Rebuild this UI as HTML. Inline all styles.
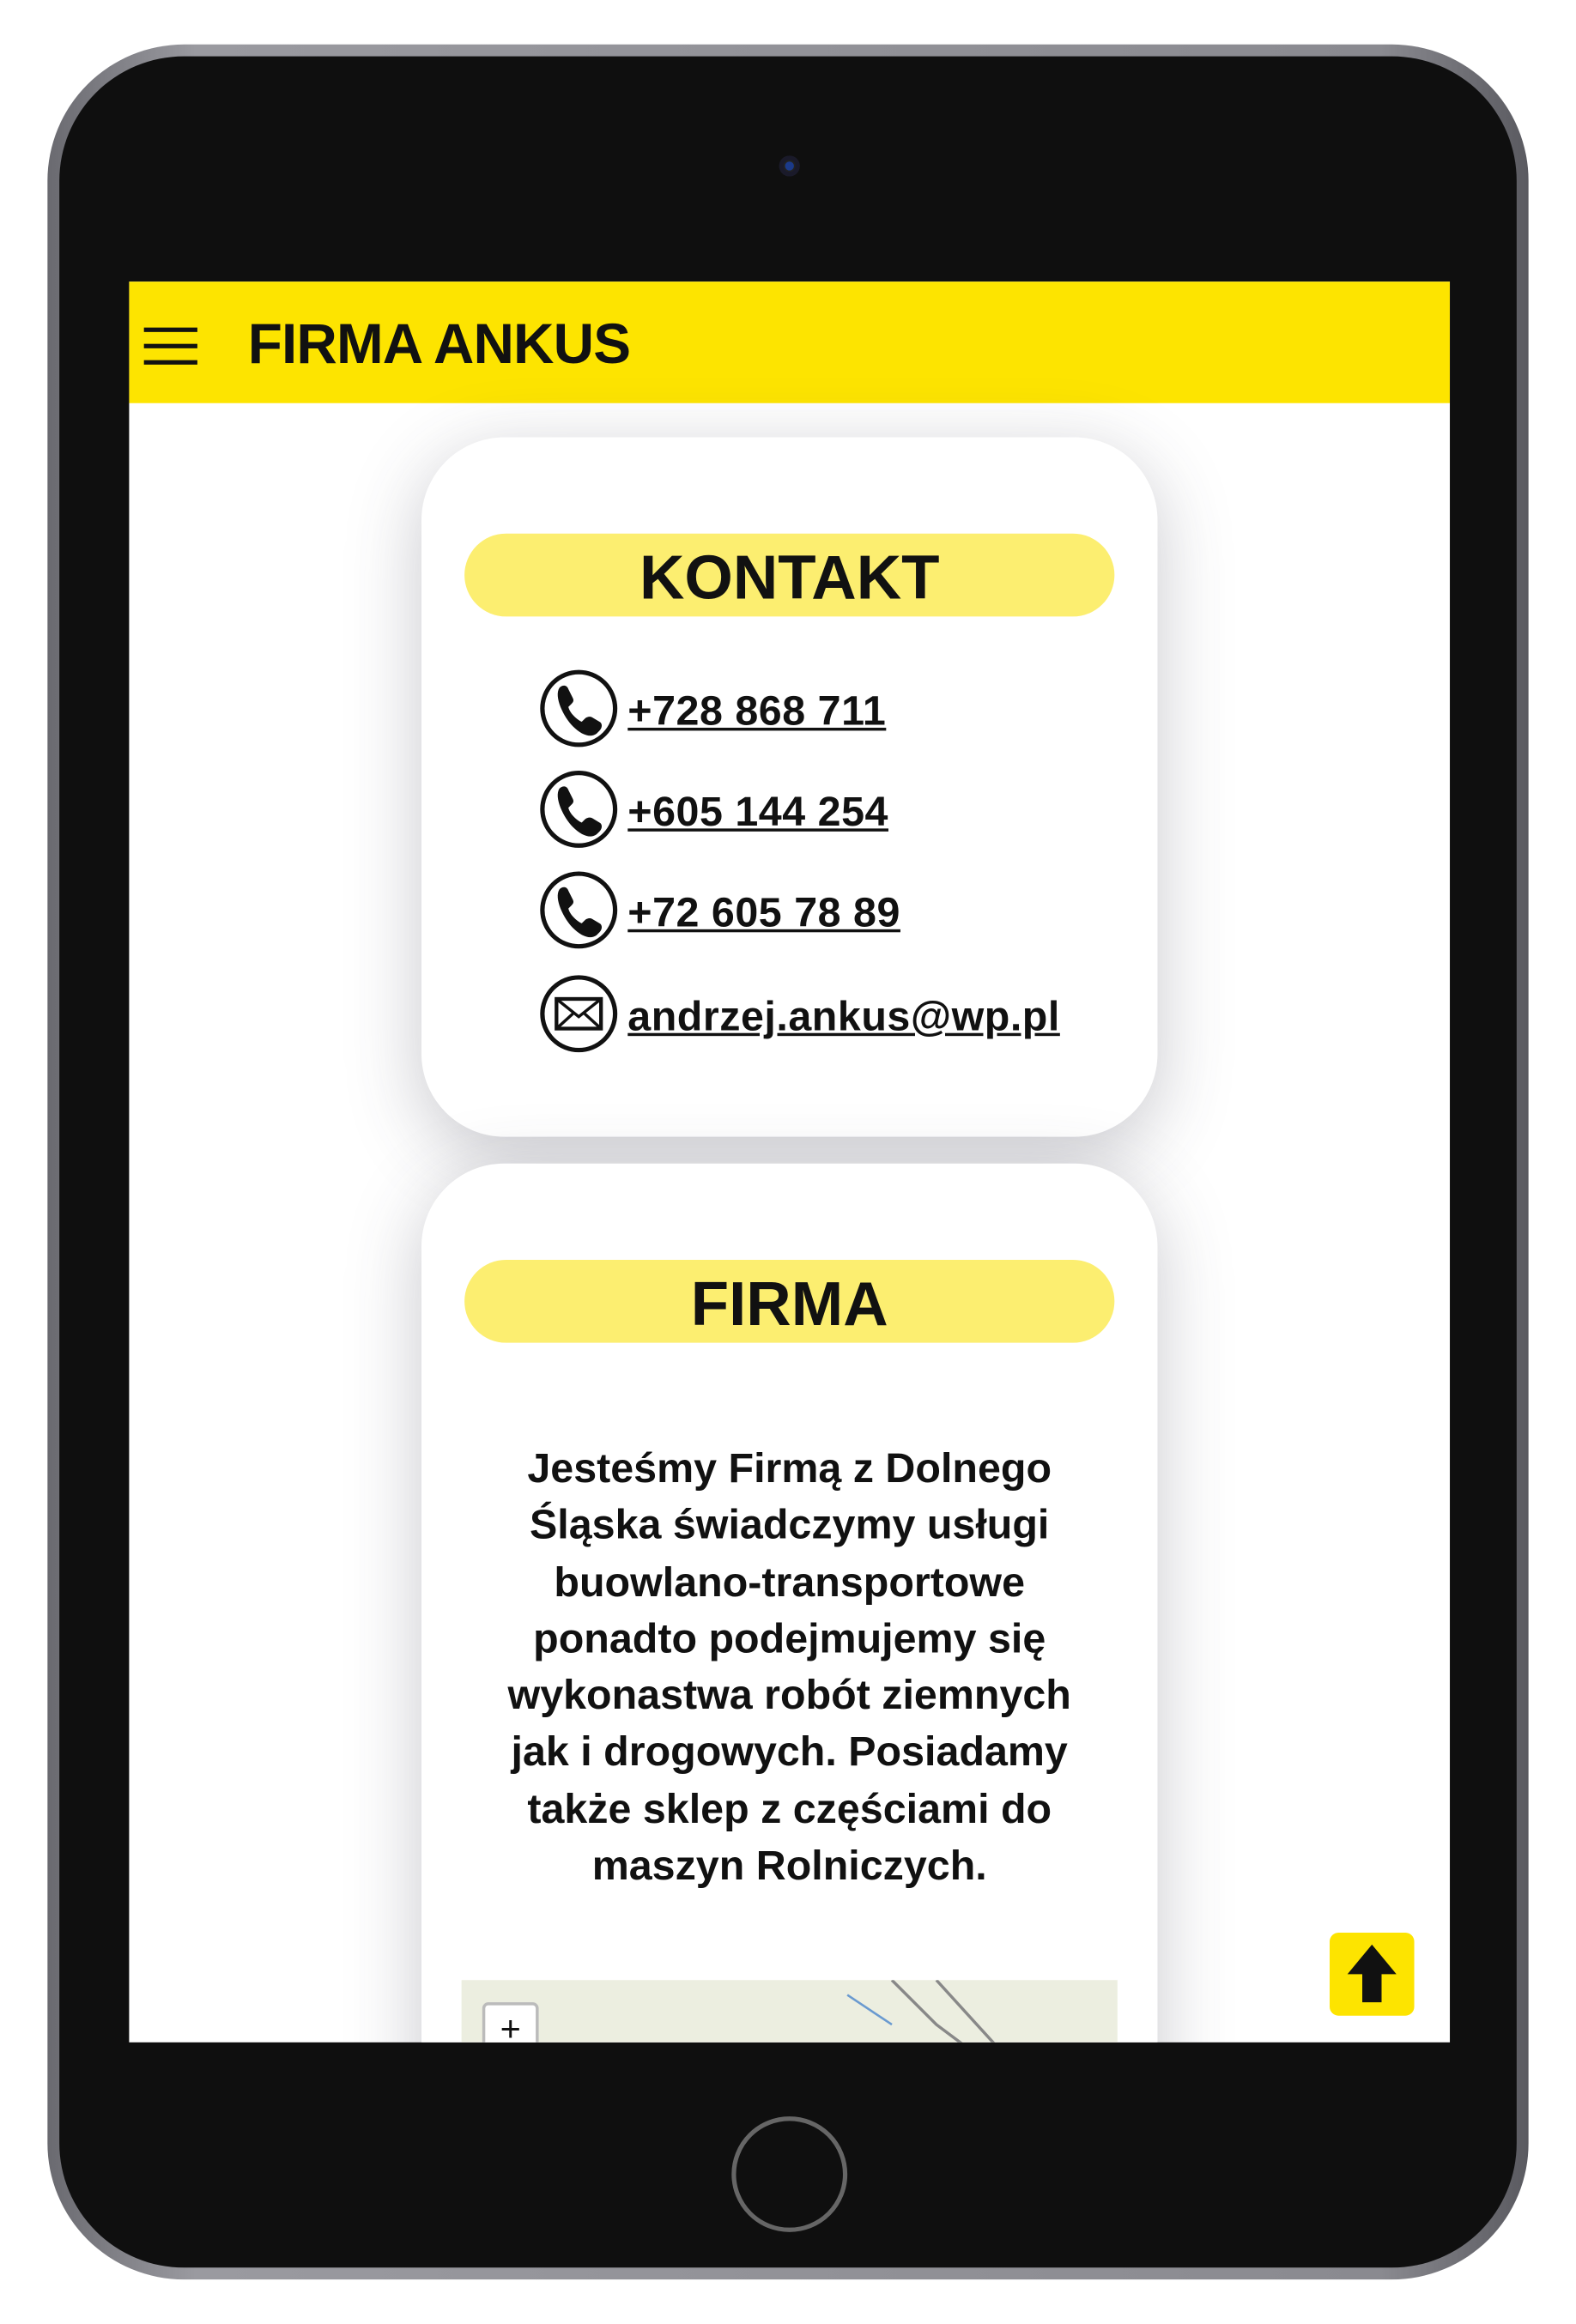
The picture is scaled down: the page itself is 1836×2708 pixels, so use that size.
<!DOCTYPE html>
<html><head><meta charset="utf-8"><style>
html,body{margin:0;padding:0;background:#fff;width:1836px;height:2708px;overflow:hidden}
#w{position:absolute;left:0;top:0;width:1062px;height:1568px;transform:scale(1.7288,1.727);transform-origin:0 0;font-family:"Liberation Sans",sans-serif;font-weight:bold;color:#111}
.dev{position:absolute;left:32px;top:30px;width:998px;height:1508px;border-radius:92px;background:linear-gradient(90deg,#6a6a70,#9a9aa0 10%,#8a8a90 90%,#5a5a60);}
.blk{position:absolute;left:8px;top:8px;right:8px;bottom:8px;border-radius:84px;background:#0f0f0f}
.cam{position:absolute;left:525px;top:105px;width:14px;height:14px;border-radius:50%;background:#222;box-shadow:inset 0 0 0 3px #1a1a2a}
.cam:after{content:"";position:absolute;left:4px;top:4px;width:6px;height:6px;border-radius:50%;background:#1b3a8a}
.home{position:absolute;left:493px;top:1428px;width:78px;height:78px;border-radius:50%;border:3px solid #666;box-sizing:border-box}
.scr{position:absolute;left:87px;top:190px;width:890px;height:1188px;background:#fff;overflow:hidden}
.hdr{position:absolute;left:0;top:0;width:890px;height:82px;background:#fde400}
.hb{position:absolute;left:10px;width:36px;height:3px;background:#111}
.ttl{position:absolute;left:80px;top:22px;font-size:38px;letter-spacing:-0.5px}
.card{position:absolute;left:197px;width:496px;background:#fff;border-radius:56px;box-shadow:0 12px 50px rgba(60,60,80,.28)}
.pill{position:absolute;left:29px;width:438px;height:56px;border-radius:28px;background:#fcee70;text-align:center;font-size:42px;line-height:60px}
.row{position:absolute;left:80px;height:50px}
.ic{position:absolute;left:0;top:0;width:46px;height:46px;border:3px solid #111;border-radius:50%}
.lk{position:absolute;left:59px;top:12px;font-size:28px;text-decoration:underline;white-space:nowrap;letter-spacing:0.3px}
.p{position:absolute;left:40px;width:416px;top:187px;text-align:center;font-size:28px;line-height:38.3px}
.map{position:absolute;left:27px;top:551px;width:442px;height:60px;background:#eceee0}
.up{position:absolute;left:809px;top:1114px;width:57px;height:56px;background:#fde400;border-radius:6px}
</style></head><body><div id="w">
<div class="dev"><div class="blk"></div></div>
<div class="cam"></div>
<div class="home"></div>
<div class="scr">
 <div class="hdr">
  <div class="hb" style="top:31px"></div><div class="hb" style="top:42px"></div><div class="hb" style="top:53px"></div>
  <div class="ttl">FIRMA ANKUS</div>
 </div>
 <div class="card" style="top:105px;height:472px">
  <div class="pill" style="top:65px">KONTAKT</div>
  <div class="row" style="top:157px"><div class="ic"><svg width="46" height="46" viewBox="0 0 46 46"><path d="M10 9c2-2 5-2 6 1l3 6c1 2 0 3-1 4l-2 2c1 4 5 8 9 10l2-2c1-1 3-2 5-1l5 3c2 1 2 4 0 6l-2 2c-4 3-10 1-16-5S6 15 10 9z" fill="#111"/></svg></div><div class="lk">+728 868 711</div></div>
  <div class="row" style="top:225px"><div class="ic"><svg width="46" height="46" viewBox="0 0 46 46"><path d="M10 9c2-2 5-2 6 1l3 6c1 2 0 3-1 4l-2 2c1 4 5 8 9 10l2-2c1-1 3-2 5-1l5 3c2 1 2 4 0 6l-2 2c-4 3-10 1-16-5S6 15 10 9z" fill="#111"/></svg></div><div class="lk">+605 144 254</div></div>
  <div class="row" style="top:293px"><div class="ic"><svg width="46" height="46" viewBox="0 0 46 46"><path d="M10 9c2-2 5-2 6 1l3 6c1 2 0 3-1 4l-2 2c1 4 5 8 9 10l2-2c1-1 3-2 5-1l5 3c2 1 2 4 0 6l-2 2c-4 3-10 1-16-5S6 15 10 9z" fill="#111"/></svg></div><div class="lk">+72 605 78 89</div></div>
  <div class="row" style="top:363px"><div class="ic"><svg width="46" height="46" viewBox="0 0 46 46"><rect x="8" y="13" width="30" height="20" fill="none" stroke="#111" stroke-width="2.5"/><path d="M8 13l15 12 15-12M8 33l11-10M38 33l-11-10" fill="none" stroke="#111" stroke-width="2"/></svg></div><div class="lk" style="top:12px">andrzej.ankus@wp.pl</div></div>
 </div>
 <div class="card" style="top:595px;height:700px">
  <div class="pill" style="top:65px">FIRMA</div>
  <div class="p">Jesteśmy Firmą z Dolnego Śląska świadczymy usługi buowlano-transportowe ponadto podejmujemy się wykonastwa robót ziemnych jak i drogowych. Posiadamy także sklep z częściami do maszyn Rolniczych.</div>
  <div class="map"><svg width="442" height="60" style="position:absolute;left:0;top:0"><path d="M290 0l30 30 40 30M320 0l50 55" stroke="#888" stroke-width="2" fill="none"/><path d="M260 10l30 20" stroke="#6a9ad0" stroke-width="1.5" fill="none"/></svg><div style="position:absolute;left:14px;top:15px;width:34px;height:34px;background:#fff;border:2px solid #bbb;border-radius:4px;font-size:24px;text-align:center;line-height:34px;font-weight:normal">+</div></div>
 </div>
 <div class="up"><svg width="57" height="56" viewBox="0 0 57 56"><path d="M28.5 8L12 28h10v19h13V28h10z" fill="#111"/></svg></div>
</div>
</div></body></html>
